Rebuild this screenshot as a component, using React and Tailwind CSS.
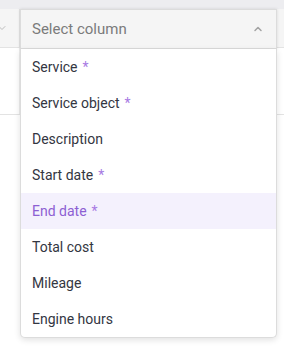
import { ChevronDown, ChevronUp } from 'lucide-react';

const columns = [
  { label: 'Service', required: true },
  { label: 'Service object', required: true },
  { label: 'Description' },
  { label: 'Start date', required: true },
  { label: 'End date', required: true, active: true },
  { label: 'Total cost' },
  { label: 'Mileage' },
  { label: 'Engine hours' },
];

function ColumnSelect() {
  return (
    <div className="absolute left-[20px] top-[9px] w-[257px]">
      <div className="flex h-[40px] items-center justify-between border border-[#dcdcdc] bg-[#f5f5f5] pl-[11px] pr-[12px] shadow-[0_0_3px_rgba(0,0,0,0.12)]">
        <span className="text-[15px] text-[#7b7b7b]">Select column</span>
        <ChevronUp className="h-[12px] w-[12px] text-[#a3a3a3]" strokeWidth={3} />
      </div>
      <ul className="rounded-b-[5px] border border-t-0 border-[#dcdcdc] bg-white shadow-[0_2px_6px_rgba(0,0,0,0.12)]">
        {columns.map((c) => (
          <li
            key={c.label}
            className={`flex h-[36px] items-center px-[11px] text-[14px] ${c.active ? 'bg-[#f4f1fd] text-[#8d5fd3]' : 'text-[#333642]'}`}
          >
            {c.label}
            {c.required && <span className="ml-[5px] text-[#a77ae3]">*</span>}
          </li>
        ))}
      </ul>
    </div>
  );
}

export default function App() {
  return (
    <div className="relative h-[352px] w-[284px] overflow-hidden bg-white font-['Roboto',sans-serif]">
      <div className="h-[9px] bg-[#ededf0]" />
      <div className="flex h-[39px] border-b border-[#e3e3e3] bg-[#f5f5f5]">
        <div className="flex w-[20px] items-center overflow-hidden border-r border-[#e3e3e3]">
          <ChevronDown className="-ml-[4px] h-[12px] w-[12px] text-[#bdbdbd]" strokeWidth={2} />
        </div>
        <div className="flex-1" />
      </div>
      <div className="flex h-[67px] border-b border-[#e3e3e3]">
        <div className="w-[20px] border-r border-[#ececec]" />
        <div className="flex-1" />
      </div>
      <ColumnSelect />
    </div>
  );
}
